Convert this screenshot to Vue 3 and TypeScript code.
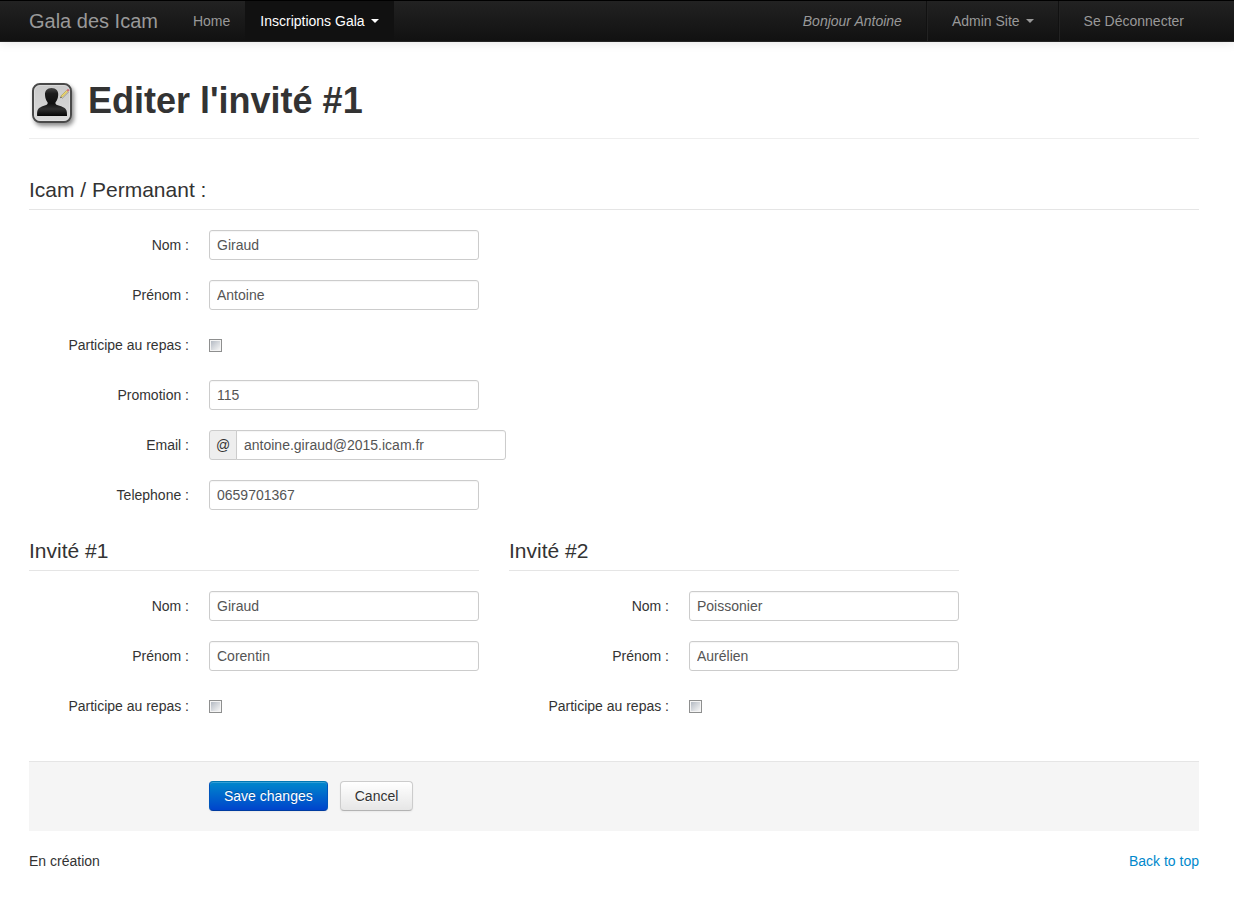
<script setup lang="ts">
import { reactive } from 'vue'

interface Guest {
  id: string
  title: string
  nom: string
  prenom: string
  repas: boolean
}

const icam = reactive({
  nom: 'Giraud',
  prenom: 'Antoine',
  repas: false,
  promotion: '115',
  email: 'antoine.giraud@2015.icam.fr',
  telephone: '0659701367',
})

const guests = reactive<Guest[]>([
  { id: 'invite1', title: 'Invité #1', nom: 'Giraud', prenom: 'Corentin', repas: false },
  { id: 'invite2', title: 'Invité #2', nom: 'Poissonier', prenom: 'Aurélien', repas: false },
])
</script>

<template>
  <div id="top" class="page">
    <nav class="navbar">
      <div class="navbar-inner container">
        <a class="brand" href="#">Gala des Icam</a>
        <a class="nav-link" href="#">Home</a>
        <a class="nav-link active" href="#">Inscriptions Gala<span class="caret"></span></a>
        <div class="nav-right">
          <a class="nav-link" href="#"><em>Bonjour Antoine</em></a>
          <span class="divider"></span>
          <a class="nav-link" href="#">Admin Site<span class="caret"></span></a>
          <span class="divider"></span>
          <a class="nav-link" href="#">Se Déconnecter</a>
        </div>
      </div>
    </nav>

    <main class="container">
      <header class="page-header">
        <svg class="avatar" width="52" height="52" viewBox="0 0 52 52" aria-hidden="true">
          <defs>
            <linearGradient id="plate" x1="0" y1="0" x2="0" y2="1">
              <stop offset="0" stop-color="#c9c9c9" />
              <stop offset="1" stop-color="#dadada" />
            </linearGradient>
            <linearGradient id="body" x1="0" y1="0" x2="0" y2="1">
              <stop offset="0" stop-color="#444" />
              <stop offset=".2" stop-color="#1c1c1c" />
              <stop offset=".55" stop-color="#111" />
              <stop offset=".75" stop-color="#303030" />
              <stop offset="1" stop-color="#050505" />
            </linearGradient>
            <filter id="shade" x="-30%" y="-30%" width="170%" height="170%">
              <feDropShadow dx="2" dy="3" stdDeviation="2" flood-color="#000" flood-opacity=".45" />
            </filter>
          </defs>
          <rect x="4" y="5" width="38" height="38" rx="7" fill="url(#plate)" stroke="#4a4a4a" stroke-width="2" filter="url(#shade)" />
          <rect x="5.500" y="6.500" width="35" height="35" rx="5.500" fill="none" stroke="#e2e2e2" stroke-width="1" opacity=".6" />
          <path
            d="M22.500 9C18 9 15.700 12 16 16C16.200 19 17 21.500 18.500 23.300C19 24.500 18.500 25.500 17.200 26C13 27.500 9.500 28.500 8.500 31.500C8 33 8 36 8.200 37H38C38 35 38 33 37.500 31.500C36.500 28.500 32.500 27.500 28 26C26.700 25.500 26 24.500 26.600 23.300C28.200 21.500 29 19 29.200 16C29.500 12 27.200 9 22.500 9Z"
            fill="url(#body)"
          />
          <path d="M33 20L40 13" stroke="#777" stroke-width="1" opacity=".35" />
          <path d="M32.500 17.800L38.300 12" stroke="#a58f45" stroke-width="2.200" />
          <path d="M32.500 17.800L38.300 12" stroke="#f0dc72" stroke-width="1.300" />
          <path d="M38.300 12L39.800 10.500" stroke="#cf6f76" stroke-width="2.200" />
          <path d="M31 19.300L31.800 17.200L33.100 18.500Z" fill="#5b5138" />
        </svg>
        <h1>Editer l'invité #1</h1>
      </header>

      <form @submit.prevent>
        <fieldset>
          <legend>Icam / Permanant :</legend>
          <div class="row">
            <label for="nom">Nom :</label>
            <input id="nom" v-model="icam.nom" class="text" type="text" />
          </div>
          <div class="row">
            <label for="prenom">Prénom :</label>
            <input id="prenom" v-model="icam.prenom" class="text" type="text" />
          </div>
          <div class="row">
            <label for="repas">Participe au repas :</label>
            <input id="repas" v-model="icam.repas" class="tick" type="checkbox" />
          </div>
          <div class="row">
            <label for="promotion">Promotion :</label>
            <input id="promotion" v-model="icam.promotion" class="text" type="text" />
          </div>
          <div class="row">
            <label for="email">Email :</label>
            <span class="add-on">@</span>
            <input id="email" v-model="icam.email" class="text appended" type="text" />
          </div>
          <div class="row">
            <label for="telephone">Telephone :</label>
            <input id="telephone" v-model="icam.telephone" class="text" type="text" />
          </div>
        </fieldset>

        <div class="guests">
          <fieldset v-for="guest in guests" :key="guest.id" class="guest">
            <legend>{{ guest.title }}</legend>
            <div class="row">
              <label :for="guest.id + '-nom'">Nom :</label>
              <input :id="guest.id + '-nom'" v-model="guest.nom" class="text" type="text" />
            </div>
            <div class="row">
              <label :for="guest.id + '-prenom'">Prénom :</label>
              <input :id="guest.id + '-prenom'" v-model="guest.prenom" class="text" type="text" />
            </div>
            <div class="row">
              <label :for="guest.id + '-repas'">Participe au repas :</label>
              <input :id="guest.id + '-repas'" v-model="guest.repas" class="tick" type="checkbox" />
            </div>
          </fieldset>
        </div>

        <div class="form-actions">
          <button class="btn primary" type="submit">Save changes</button>
          <button class="btn" type="reset">Cancel</button>
        </div>
      </form>

      <footer>
        <span>En création</span>
        <a href="#top">Back to top</a>
      </footer>
    </main>
  </div>
</template>

<style>
body {
  background: #fff;
}
</style>

<style scoped>
.page {
  font-family: "Liberation Sans", Arial, sans-serif;
  font-size: 14px;
  line-height: 20px;
  color: #333;
}

.container {
  box-sizing: border-box;
  max-width: 1234px;
  margin: 0 auto;
  padding: 0 35px 0 29px;
}

a {
  color: #08c;
  text-decoration: none;
}

.navbar {
  background: linear-gradient(#222, #111);
  border-top: 1px solid #000;
  border-bottom: 1px solid #252525;
  box-shadow: 0 1px 10px rgba(0, 0, 0, 0.1);
}

.navbar-inner {
  display: flex;
  height: 40px;
}

.brand {
  padding: 10px 20px 10px 0;
  font-size: 20px;
  color: #999;
}

.nav-link {
  display: flex;
  align-items: center;
  padding: 0 15px;
  color: #999;
}

.nav-link.active {
  background: #111;
  color: #fff;
}

.caret {
  margin-left: 6px;
  border-top: 4px solid currentColor;
  border-left: 4px solid transparent;
  border-right: 4px solid transparent;
}

.nav-right {
  display: flex;
  margin-left: auto;
}

.divider {
  width: 1px;
  margin: 0 9px;
  background: #111;
  border-right: 1px solid #222;
}

.page-header {
  display: flex;
  align-items: flex-start;
  padding: 37px 0 7px;
  border-bottom: 1px solid #eee;
}

.avatar {
  margin-right: 7px;
}

h1 {
  margin: 2px 0 0;
  font-size: 36px;
  line-height: 40px;
}

form {
  padding-top: 30px;
}

fieldset {
  min-width: 0;
  margin: 0;
  padding: 0;
  border: 0;
}

legend {
  box-sizing: border-box;
  width: 100%;
  margin-bottom: 20px;
  padding: 2px 0 0;
  border-bottom: 1px solid #e5e5e5;
  font-size: 21px;
  line-height: 38px;
}

.row {
  display: flex;
  align-items: center;
  height: 30px;
  margin-bottom: 20px;
}

.row label {
  width: 160px;
  margin-right: 20px;
  text-align: right;
}

.text {
  box-sizing: border-box;
  width: 270px;
  height: 30px;
  padding: 4px 7px;
  border: 1px solid #ccc;
  border-radius: 3px;
  background: #fff;
  box-shadow: inset 0 1px 1px rgba(0, 0, 0, 0.04);
  font: inherit;
  color: #555;
}

.add-on {
  box-sizing: border-box;
  width: 28px;
  height: 30px;
  margin-right: -1px;
  padding: 4px 0;
  border: 1px solid #ccc;
  border-radius: 3px 0 0 3px;
  background: #eee;
  text-align: center;
}

.appended {
  border-radius: 0 3px 3px 0;
}

.tick {
  appearance: none;
  box-sizing: border-box;
  width: 13px;
  height: 13px;
  margin: 0;
  padding: 1px;
  border: 1px solid #8e8f8f;
  background: linear-gradient(135deg, #b4bac3, #f6f6f6) content-box, #f4f4f4;
}

.tick:checked {
  background: #555 content-box;
}

.guests {
  display: flex;
  gap: 30px;
}

.guest {
  width: 450px;
}

.form-actions {
  display: flex;
  gap: 12px;
  margin: 20px 0;
  padding: 19px 20px 20px 180px;
  border-top: 1px solid #e5e5e5;
  background: #f5f5f5;
}

.btn {
  box-sizing: border-box;
  height: 30px;
  padding: 4px 14px;
  border: 1px solid #bbb;
  border-color: #ccc #ccc #b3b3b3;
  border-radius: 4px;
  background: linear-gradient(#fff, #e6e6e6);
  box-shadow: inset 0 1px 0 rgba(255, 255, 255, 0.2), 0 1px 2px rgba(0, 0, 0, 0.05);
  font: inherit;
  color: #333;
  text-shadow: 0 1px 1px rgba(255, 255, 255, 0.75);
}

.btn.primary {
  border-color: #0077b3 #0055bb #003ba0;
  background: linear-gradient(#08c, #04c);
  color: #fff;
  text-shadow: 0 -1px 0 rgba(0, 0, 0, 0.25);
}

footer {
  display: flex;
  justify-content: space-between;
}
</style>
